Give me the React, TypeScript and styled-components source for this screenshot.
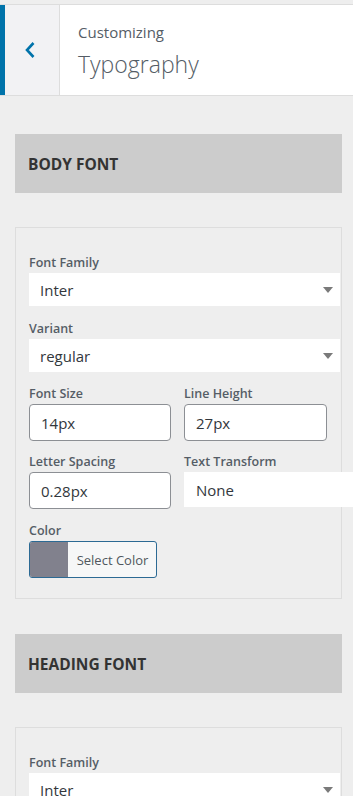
import React from "react";
import styled, { createGlobalStyle } from "styled-components";

const Global = createGlobalStyle`
  html, body { margin: 0; padding: 0; background: #eeeeee; }
  body { font-family: "Open Sans", "Noto Sans", sans-serif; color: #555d66; overflow: hidden; }
  * { box-sizing: border-box; }
`;

const Page = styled.div`
  width: 353px;
  min-height: 796px;
  background: #eeeeee;
  padding-top: 4px;
`;

const Header = styled.header`
  display: flex;
  height: 92px;
  background: #ffffff;
  border-top: 1px solid #dddddd;
  border-bottom: 1px solid #dddddd;
`;

const BackButton = styled.button`
  width: 60px;
  flex: none;
  border: none;
  border-left: 5px solid #0073aa;
  border-right: 1px solid #dddddd;
  background: #f2f2f4;
  display: flex;
  align-items: center;
  justify-content: center;
  padding: 0 4px 0 0;
  margin: 0;
  cursor: pointer;
`;

const TitleBlock = styled.div`
  display: flex;
  flex-direction: column;
  justify-content: center;
  padding-left: 18px;
  padding-top: 1px;
`;

const Eyebrow = styled.span`
  font-size: 15px;
  line-height: 20px;
  color: #555d66;
`;

const Title = styled.h1`
  margin: 7px 0 0;
  font-size: 23px;
  line-height: 30px;
  font-weight: 300;
  color: #555d66;
`;

const Content = styled.main`
  padding: 38px 11px 0 15px;
`;

const SectionHeader = styled.div`
  height: 59px;
  background: #cccccc;
  display: flex;
  align-items: center;
  padding-left: 13px;
  margin-bottom: 34px;
  font-size: 15.5px;
  font-weight: 700;
  color: #333333;
`;

const Panel = styled.section`
  border: 1px solid #dddddd;
  padding: 27px 0 20px 13px;
  margin-bottom: 35px;
`;

const Field = styled.div<{ $gap?: number }>`
  display: flex;
  flex-direction: column;
  margin-bottom: ${(p) => p.$gap ?? 14}px;
`;

const Label = styled.label`
  font-size: 12.5px;
  line-height: 16px;
  font-weight: 600;
  color: #555d66;
  margin-bottom: 2px;
  white-space: nowrap;
`;

const SelectBox = styled.div<{ $width?: number }>`
  position: relative;
  height: 33px;
  width: ${(p) => (p.$width ? `${p.$width}px` : "311px")};
  background: #ffffff;
  display: flex;
  align-items: center;
  padding-left: 11px;
  font-size: 15px;
  color: #32373c;
`;

const Arrow = styled.span`
  position: absolute;
  right: 7px;
  top: 14px;
  width: 0;
  height: 0;
  border-left: 5px solid transparent;
  border-right: 5px solid transparent;
  border-top: 6px solid #7a7a7a;
`;

const Row = styled.div`
  display: grid;
  grid-template-columns: 142px 175px;
  column-gap: 13px;
`;

const TextInput = styled.div<{ $width?: number }>`
  height: 37px;
  width: ${(p) => p.$width ?? 142}px;
  border: 1px solid #8c8f94;
  border-radius: 4px;
  background: #ffffff;
  display: flex;
  align-items: center;
  padding-left: 11px;
  font-size: 15px;
  color: #32373c;
`;

const TTSelect = styled.div`
  height: 35px;
  width: 175px;
  background: #ffffff;
  display: flex;
  align-items: center;
  padding-left: 12px;
  font-size: 15px;
  color: #32373c;
`;

const ColorButton = styled.button`
  display: flex;
  align-items: stretch;
  height: 37px;
  width: 128px;
  padding: 0;
  margin: 0;
  border: 1px solid #2c6a94;
  border-radius: 3px;
  overflow: hidden;
  background: #f6f7f7;
  cursor: pointer;
`;

const Swatch = styled.span<{ $color: string }>`
  width: 38px;
  flex: none;
  background: ${(p) => p.$color};
`;

const SwatchText = styled.span`
  flex: 1;
  display: flex;
  align-items: center;
  justify-content: center;
  padding-left: 1px;
  font-family: "Open Sans", "Noto Sans", sans-serif;
  font-size: 13px;
  color: #50575e;
`;

const Select = ({ value, width }: { value: string; width?: number }) => (
  <SelectBox $width={width}>
    {value}
    <Arrow />
  </SelectBox>
);

export default function App() {
  return (
    <Page>
      <Global />
      <Header>
        <BackButton aria-label="Back">
          <svg width="12" height="18" viewBox="0 0 12 18">
            <path d="M9.5 2 L3 9 L9.5 16" fill="none" stroke="#0073aa" strokeWidth="2.6" />
          </svg>
        </BackButton>
        <TitleBlock>
          <Eyebrow>Customizing</Eyebrow>
          <Title>Typography</Title>
        </TitleBlock>
      </Header>
      <Content>
        <SectionHeader>BODY FONT</SectionHeader>
        <Panel>
          <Field $gap={15}>
            <Label>Font Family</Label>
            <Select value="Inter" />
          </Field>
          <Field $gap={14}>
            <Label>Variant</Label>
            <Select value="regular" />
          </Field>
          <Field $gap={13}>
            <Row>
              <Field $gap={0}>
                <Label>Font Size</Label>
                <TextInput>14px</TextInput>
              </Field>
              <Field $gap={0}>
                <Label>Line Height</Label>
                <TextInput $width={143}>27px</TextInput>
              </Field>
            </Row>
          </Field>
          <Field $gap={14}>
            <Row>
              <Field $gap={0}>
                <Label>Letter Spacing</Label>
                <TextInput>0.28px</TextInput>
              </Field>
              <Field $gap={0}>
                <Label>Text Transform</Label>
                <TTSelect>None</TTSelect>
              </Field>
            </Row>
          </Field>
          <Field $gap={0}>
            <Label>Color</Label>
            <ColorButton>
              <Swatch $color="#81818d" />
              <SwatchText>Select Color</SwatchText>
            </ColorButton>
          </Field>
        </Panel>
        <SectionHeader>HEADING FONT</SectionHeader>
        <Panel>
          <Field>
            <Label>Font Family</Label>
            <Select value="Inter" />
          </Field>
        </Panel>
      </Content>
    </Page>
  );
}
